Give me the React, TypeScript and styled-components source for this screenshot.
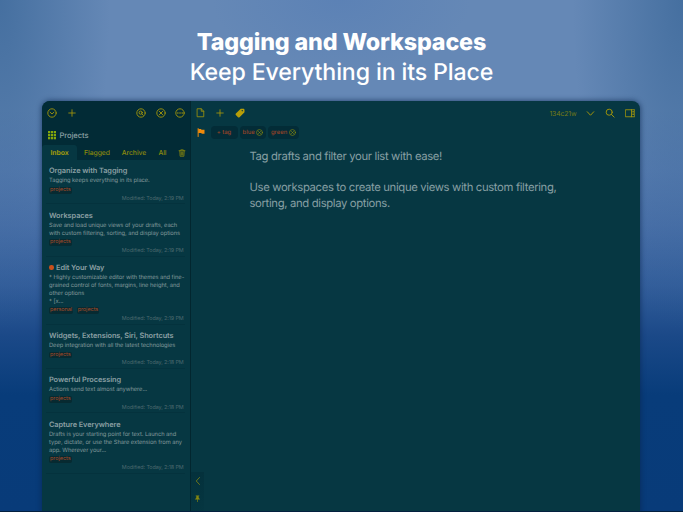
import React from "react";
import styled, { createGlobalStyle } from "styled-components";

const GlobalStyle = createGlobalStyle`
  * { box-sizing: border-box; }
  body { margin: 0; overflow: hidden; background: #083b79; text-rendering: geometricPrecision; }
`;

const gold = "#a5970a";

const Page = styled.main`
  width: 683px;
  height: 512px;
  overflow: hidden;
  display: flex;
  flex-direction: column;
  font-family: Inter, "Liberation Sans", sans-serif;
  border-bottom: 1px solid #03203f;
  background:
    radial-gradient(ellipse 130px 70px at 50% 0, rgba(78, 120, 180, 0.4), transparent),
    radial-gradient(ellipse 110px 330px at 0 0, rgba(48, 95, 145, 0.6), transparent),
    radial-gradient(ellipse 110px 330px at 100% 0, rgba(48, 95, 145, 0.6), transparent),
    linear-gradient(180deg, #6588b6 0, #6588b6 110px, #5b7fb3 170px, #4b71aa 225px, #335e9b 285px, #1b4988 335px, #083c7a 395px, #083b79 100%);
`;

const Headline = styled.header`
  height: 101px;
  flex: none;
  padding-top: 27px;
  text-align: center;
  color: #fff;
  white-space: nowrap;
`;
const HeadTitle = styled.h1`
  margin: 0;
  font-size: 23.3px;
  font-weight: 800;
  line-height: 30px;
  letter-spacing: -0.15px;
`;
const HeadSub = styled.p`
  margin: 0;
  font-size: 23.2px;
  font-weight: 450;
  line-height: 30px;
  letter-spacing: -0.14px;
`;

const Device = styled.section`
  width: 598px;
  height: 411px;
  margin-left: 42px;
  flex: none;
  display: flex;
  overflow: hidden;
  border-radius: 8px 8px 0 0;
  background: #063742;
  box-shadow: 0 0 5px 1px rgba(10, 35, 75, 0.55);
`;

const Sidebar = styled.aside`
  width: 149px;
  flex: none;
  border-right: 1px solid #02262f;
`;
const SideHead = styled.div`
  height: 59px;
  background: #022b36;
`;
const SideTools = styled.div`
  height: 25px;
  padding: 0 5px 1px 5px;
  display: flex;
  align-items: center;
  color: ${gold};
`;
const Gap = styled.i<{ $w?: number }>`
  flex: ${(p) => (p.$w ? `0 0 ${p.$w}px` : "1")};
`;
const Icon = styled.svg<{ $s: number }>`
  width: ${(p) => p.$s}px;
  height: ${(p) => p.$s}px;
  flex: none;
  display: block;
  fill: none;
  stroke: currentColor;
  stroke-linecap: round;
  stroke-linejoin: round;
`;
const Workspace = styled.div`
  height: 19px;
  padding-left: 5.5px;
  display: flex;
  align-items: center;
  gap: 3.5px;
  font-size: 7.6px;
  font-weight: 500;
  color: #8ba0a3;
  letter-spacing: -0.08px;
`;
const Tabs = styled.nav`
  height: 15px;
  display: flex;
`;
const Tab = styled.span<{ $w: number; $on?: boolean }>`
  width: ${(p) => p.$w}px;
  flex: none;
  display: flex;
  align-items: center;
  justify-content: center;
  font-size: 6.8px;
  font-weight: ${(p) => (p.$on ? 700 : 500)};
  letter-spacing: -0.05px;
  color: ${(p) => (p.$on ? "#9f9a0b" : "#8c8a0c")};
  background: ${(p) => (p.$on ? "#063742" : "transparent")};
  border-radius: 3px 3px 0 0;
`;

const Row = styled.article`
  margin: 0 5px 0 4px;
  padding: 5.2px 2px 0 3px;
  border-bottom: 1px solid #04323d;
`;
const RowTitle = styled.h2`
  margin: 0;
  height: 11.3px;
  display: flex;
  align-items: center;
  gap: 2.5px;
  white-space: nowrap;
  font-size: 7.4px;
  font-weight: 600;
  line-height: 11px;
  letter-spacing: -0.09px;
  color: #8a9fa2;
`;
const Dot = styled.i`
  width: 4.5px;
  height: 4.5px;
  border-radius: 50%;
  background: #c9501c;
`;
const Line = styled.p`
  margin: 0;
  height: 7.85px;
  line-height: 9.4px;
  font-size: 5.75px;
  color: #849a9d;
  white-space: nowrap;
  letter-spacing: -0.05px;
`;
const TagRow = styled.div`
  height: 10.2px;
  padding-top: 2px;
  display: flex;
  align-items: center;
  gap: 3.5px;
`;
const Tag = styled.span`
  height: 6.5px;
  padding: 0 1px;
  border-radius: 2px;
  line-height: 6.5px;
  font-size: 5.5px;
  letter-spacing: -0.05px;
  background: #072a31;
  color: #a94a27;
`;
const Modified = styled.div`
  height: 8.9px;
  line-height: 8.6px;
  text-align: right;
  font-size: 5.4px;
  letter-spacing: -0.1px;
  color: #4c696f;
  white-space: nowrap;
  margin-right: -0.6px;
`;

const Editor = styled.section`
  flex: 1;
  display: flex;
  flex-direction: column;
`;
const EditTools = styled.div`
  height: 25px;
  padding: 0 5px 1px 5px;
  display: flex;
  align-items: center;
  color: ${gold};
`;
const SessionName = styled.span`
  font-size: 6.9px;
  letter-spacing: -0.15px;
  color: #747b16;
`;
const ChipRow = styled.div`
  height: 13px;
  padding-left: 5.5px;
  display: flex;
  align-items: center;
  gap: 2px;
`;
const Chip = styled.span<{ $w: number }>`
  width: ${(p) => p.$w}px;
  height: 13px;
  display: flex;
  align-items: center;
  justify-content: center;
  gap: 1.3px;
  border-radius: 4px;
  background: #032c37;
  color: #9c4427;
  font-size: 5.9px;
  font-weight: 500;
  white-space: nowrap;
`;
const Close = styled.span`
  color: #8d900e;
`;
const Draft = styled.div`
  flex: 1;
  padding: 10px 0 0 58.5px;
  font-size: 11.3px;
  line-height: 15.5px;
  letter-spacing: -0.35px;
  color: #879fa3;
`;
const DraftLine = styled.p`
  margin: 0;
  height: 15.5px;
  white-space: nowrap;
`;
const SideActions = styled.div`
  width: 13px;
  height: 40px;
  padding-top: 4px;
  display: flex;
  flex-direction: column;
  align-items: center;
  gap: 9px;
  color: #858710;
  background: linear-gradient(#04313c 0, #053641 100%);
`;

const Circle = ({ children, s = 10 }: { children: React.ReactNode; s?: number }) => (
  <Icon $s={s} viewBox="0 0 20 20" strokeWidth="1.8">
    <circle cx="10" cy="10" r="8.4" />
    {children}
  </Icon>
);
const Plus = () => (
  <Icon $s={8} viewBox="0 0 16 16" strokeWidth="1.7"><path d="M8 1.5v13M1.5 8h13" /></Icon>
);
const Remove = () => (
  <Close><Circle s={7}><path d="M7 7l6 6M13 7l-6 6" /></Circle></Close>
);

const drafts = [
  { title: "Organize with Tagging", lines: ["Tagging keeps everything in its place."], tags: ["projects"], time: "2:19" },
  { title: "Workspaces", lines: ["Save and load unique views of your drafts, each", "with custom filtering, sorting, and display options"], tags: ["projects"], time: "2:19" },
  { title: "Edit Your Way", dot: true, lines: ["* Highly customizable editor with themes and fine-", "grained control of fonts, margins, line height, and", "other options", "* [x..."], tags: ["personal", "projects"], time: "2:19" },
  { title: "Widgets, Extensions, Siri, Shortcuts", lines: ["Deep integration with all the latest technologies"], tags: ["projects"], time: "2:18" },
  { title: "Powerful Processing", lines: ["Actions send text almost anywhere..."], tags: ["projects"], time: "2:18" },
  { title: "Capture Everywhere", lines: ["Drafts is your starting point for text. Launch and", "type, dictate, or use the Share extension from any", "app. Wherever your..."], tags: ["projects"], time: "2:18" },
];

export default function App() {
  return (
    <Page>
      <GlobalStyle />
      <Headline>
        <HeadTitle>Tagging and Workspaces</HeadTitle>
        <HeadSub>Keep Everything in its Place</HeadSub>
      </Headline>
      <Device>
        <Sidebar>
          <SideHead>
            <SideTools>
              <Circle><path d="M6.2 8.4L10 12l3.8-3.6" /></Circle>
              <Gap $w={10.5} />
              <Plus />
              <Gap />
              <Circle><circle cx="9.3" cy="9.3" r="3.2" /><path d="M11.8 11.8l2.4 2.4" /></Circle>
              <Gap $w={9.5} />
              <Circle><path d="M6.7 6.7l6.6 6.6M13.3 6.7l-6.6 6.6" /></Circle>
              <Gap $w={9.5} />
              <Circle><path d="M5.7 10h.1M10 10h.1M14.3 10h.1" strokeWidth="2.8" /></Circle>
            </SideTools>
            <Workspace>
              <Icon $s={8.5} viewBox="0 0 17 17" strokeWidth="0">
                {[0, 6, 12].map((y) => [0, 6, 12].map((x) => (
                  <rect key={`${x}-${y}`} x={x} y={y} width="4.6" height="4.6" fill="#83a60c" />
                )))}
              </Icon>
              Projects
            </Workspace>
            <Tabs>
              <Tab $w={35} $on>Inbox</Tab>
              <Tab $w={40}>Flagged</Tab>
              <Tab $w={34}>Archive</Tab>
              <Tab $w={23}>All</Tab>
              <Tab $w={15}>
                <Icon $s={8} viewBox="0 0 16 16" strokeWidth="1.5">
                  <path d="M2 3.5h12M5.5 3.5V1.5h5v2M3.5 3.5l.7 11h7.6l.7-11M6.2 6v6M8 6v6M9.8 6v6" />
                </Icon>
              </Tab>
            </Tabs>
          </SideHead>
          {drafts.map((d) => (
            <Row key={d.title}>
              <RowTitle>{d.dot && <Dot />}{d.title}</RowTitle>
              {d.lines.map((l) => <Line key={l}>{l}</Line>)}
              <TagRow>{d.tags.map((t) => <Tag key={t}>{t}</Tag>)}</TagRow>
              <Modified>Modified: Today, {d.time} PM</Modified>
            </Row>
          ))}
        </Sidebar>
        <Editor>
          <EditTools>
            <Icon $s={9.5} viewBox="0 0 19 19" strokeWidth="1.6">
              <path d="M3 1.5h7.5l5 5v11H3zM10.5 1.5v5h5" />
            </Icon>
            <Gap $w={10.5} />
            <Plus />
            <Gap $w={11} />
            <Icon $s={10} viewBox="0 0 20 20">
              <path fillRule="evenodd" fill="#b79e08" stroke="none" d="M11.5 1.5h5c1.5 0 2.5 1 2.5 2.5v4.5L9 18.3c-1 1-2 1-3 0L1.7 14c-1-1-1-2 0-3zM14.5 4.2a1.3 1.3 0 1 0 .01 0z" />
            </Icon>
            <Gap />
            <SessionName>134c21w</SessionName>
            <Gap $w={9} />
            <Icon $s={9} viewBox="0 0 18 18" strokeWidth="1.9"><path d="M2.5 5.5L9 12.5l6.5-7" /></Icon>
            <Gap $w={10.5} />
            <Icon $s={10} viewBox="0 0 19 19" strokeWidth="1.8"><circle cx="8" cy="8" r="5.8" /><path d="M12.3 12.3l5 5" /></Icon>
            <Gap $w={9.5} />
            <Icon $s={10.5} viewBox="0 0 21 21" strokeWidth="1.7">
              <path d="M1.5 3.5h18v14h-18zM13 3.5v14M15.5 7h1.6M15.5 10h1.6M15.5 13h1.6" />
            </Icon>
          </EditTools>
          <ChipRow>
            <Icon $s={9} viewBox="0 0 18 18">
              <path d="M2.3 1.2V17" stroke="#f08a0a" strokeWidth="2" />
              <path d="M2.5 2h5.5l1 1.5h6v8H9.5L8.5 10h-6z" fill="#f08a0a" stroke="none" />
            </Icon>
            <Gap $w={1} />
            <Chip $w={27}>+ tag</Chip>
            <Chip $w={26.5}>blue <Remove /></Chip>
            <Chip $w={30.5}>green <Remove /></Chip>
          </ChipRow>
          <Draft>
            <DraftLine>Tag drafts and filter your list with ease!</DraftLine>
            <DraftLine />
            <DraftLine>Use workspaces to create unique views with custom filtering,</DraftLine>
            <DraftLine>sorting, and display options.</DraftLine>
          </Draft>
          <SideActions>
            <Icon $s={10} viewBox="0 0 20 20" strokeWidth="1.6"><path d="M13 3L6.5 10l6.5 7" /></Icon>
            <Icon $s={7} viewBox="0 0 14 14" strokeWidth="1.3">
              <path d="M3.5 1h7v1.6H9.2l.4 3.2 2.2 2.3v1H2.2v-1l2.2-2.3.4-3.2H3.5z" fill="currentColor" stroke="none" />
              <path d="M7 9v4.3" />
            </Icon>
          </SideActions>
        </Editor>
      </Device>
    </Page>
  );
}
